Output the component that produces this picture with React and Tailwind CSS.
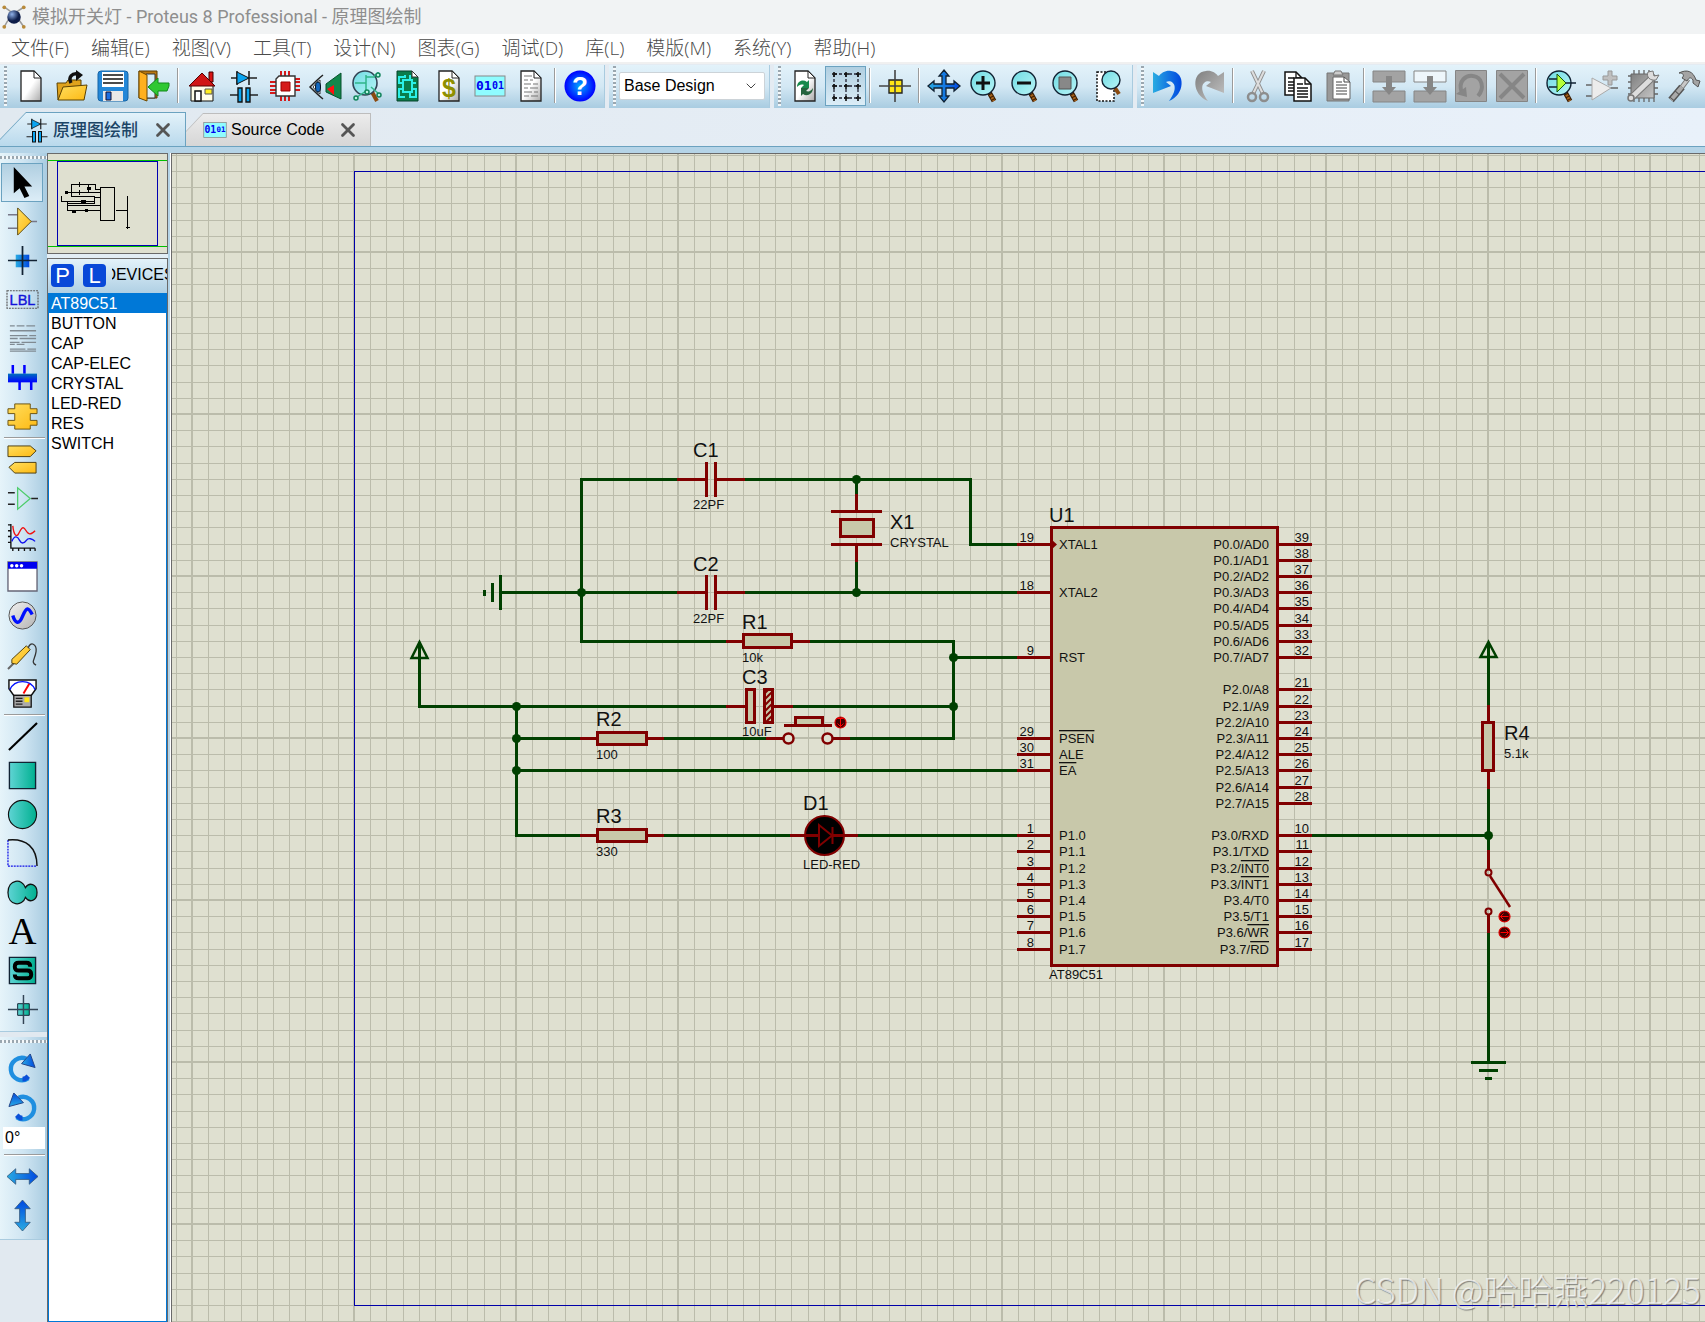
import { useState } from "react";
import { X, ChevronDown } from "lucide-react";

/* ---------- icons ---------- */

const Icon = ({ children, className = "h-8 w-8" }) => (
    <svg viewBox="0 0 32 32" className={`${className} flex-shrink-0 overflow-visible`} fill="none" aria-hidden="true">
        {children}
    </svg>
);

// Gradients shared by the icons
const Gradients = () => (
    <>
        <linearGradient id="page" x1="0" y1="0" x2="1" y2="1">
            <stop offset=".5" stopColor="#fff" />
            <stop offset="1" stopColor="#a8a8a8" />
        </linearGradient>
        <linearGradient id="gold" x1="0" y1="0" x2="1" y2="1">
            <stop offset="0" stopColor="#ffdf60" />
            <stop offset="1" stopColor="#fdb913" />
        </linearGradient>
        <linearGradient id="blue" x1="0" y1="0" x2="1" y2="0">
            <stop offset="0" stopColor="#29abe2" />
            <stop offset="1" stopColor="#0048e0" />
        </linearGradient>
        <linearGradient id="blueV" x1="0" y1="0" x2="0" y2="1">
            <stop offset="0" stopColor="#0048e0" />
            <stop offset="1" stopColor="#29abe2" />
        </linearGradient>
        <linearGradient id="bus" x1="0" y1="0" x2="0" y2="1">
            <stop offset="0" stopColor="#0071bc" />
            <stop offset="1" stopColor="#0000ff" />
        </linearGradient>
        <linearGradient id="teal" x1="0" y1="0" x2="1" y2="0">
            <stop offset="0" stopColor="#5fd4d4" />
            <stop offset="1" stopColor="#00b090" />
        </linearGradient>
        <linearGradient id="grey" x1="0" y1="0" x2="1" y2="1">
            <stop offset="0" stopColor="#f2f2f2" />
            <stop offset="1" stopColor="#b3b3b3" />
        </linearGradient>
        <linearGradient id="darkGrey" x1="0" y1="0" x2="1" y2="1">
            <stop offset="0" stopColor="#7f7f7f" />
            <stop offset="1" stopColor="#c4c4c4" />
        </linearGradient>
        <linearGradient id="lens" x1="0" y1="0" x2="1" y2="1">
            <stop offset="0" stopColor="#70dce4" />
            <stop offset="1" stopColor="#b8f4f6" />
        </linearGradient>
        <radialGradient id="help">
            <stop offset="0" stopColor="#00a8ff" />
            <stop offset="1" stopColor="#0000ff" />
        </radialGradient>
        <radialGradient id="ball" cx=".35" cy=".3">
            <stop offset="0" stopColor="#8fb0e8" />
            <stop offset="1" stopColor="#0d1c48" />
        </radialGradient>
    </>
);

const Sheet = () => (
    <>
        <path d="M6 1h13l7 7v23H6z" fill="url(#page)" stroke="#222" strokeWidth="1.3" />
        <path d="M19 1v7h7z" fill="#fff" stroke="#222" />
    </>
);

const Magnifier = ({ children }) => (
    <>
        <path d="m20 22 5 9" stroke="#3b1c00" strokeWidth="5" />
        <path d="m20 22 5 9" stroke="#a5611b" strokeWidth="3" strokeDasharray="2 1" />
        <circle cx="14" cy="13" r="12" fill="url(#lens)" stroke="#123" strokeWidth="1.4" />
        {children}
    </>
);

const BinaryBox = () => (
    <>
        <rect x="1" y="6" width="30" height="20" fill="#8ffcff" stroke="#888" />
        <text x="2" y="20" fontSize="13" fontWeight="700" fontFamily="DejaVu Sans Mono, monospace" fill="#0000f0">01</text>
        <text x="18" y="19" fontSize="10" fontWeight="700" fontFamily="DejaVu Sans Mono, monospace" fill="#0000f0">01</text>
    </>
);

const DiodeCap = () => (
    <>
        <path d="M3 8h26M9 1v14M21 1v14M2 25h9M21 25h9" stroke="#222" strokeWidth="1.6" />
        <path d="M9 2v12l12-6z" fill="#0aa4f0" stroke="#111" />
        <path d="M10 18h4v14h-4zM18 18h4v14h-4z" fill="#0aa4f0" stroke="#111" strokeWidth="1.4" />
    </>
);

const GlassHandle = <path d="m21 22 5 9" stroke="#8a4a10" strokeWidth="4" />;

const CopySheet = ({ x, y }) => (
    <g transform={`translate(${x} ${y})`}>
        <path d="M0 0h11l6 6v17H0z" fill="#fff" stroke="#111" strokeWidth="1.5" />
        <path d="M11 0v6h6M3 6h6M3 10h11M3 13h11M3 16h11M3 19h11" stroke="#111" strokeWidth="1.3" />
    </g>
);

const ICONS = {
    new: <Sheet />,
    open: (
        <>
            <path d="M2 30 1 13h9l2-3h13v6" fill="#e0a31c" stroke="#5d4200" />
            <path d="M2 30 7 17l24-2-3 15z" fill="url(#gold)" stroke="#5d4200" />
            <path d="M15 13c-3-6 1-10 7-9" stroke="#111" strokeWidth="3.5" />
            <path d="m20 0 7 5-7 6z" fill="#111" />
        </>
    ),
    save: (
        <>
            <rect x="1" y="1" width="30" height="30" rx="3" fill="#2387d8" stroke="#1764a5" />
            <path d="M5 2h22v15H5z" fill="#fff" />
            <path d="M6 5h20M6 9h20M6 13h20" stroke="#111" strokeWidth="1.5" />
            <path d="M6 21h20v10H6z" fill="#e8e8e8" />
            <path d="M9 22h5v8H9z" fill="#1d6fe0" stroke="#113" />
        </>
    ),
    exit: (
        <>
            <path d="M1 1h18v27H1z" fill="#b87711" stroke="#5d3b00" />
            <path d="M8 4h9v24H8z" fill="#d6ecf7" stroke="#333" />
            <path d="M1 1 9 5v26l-8-3z" fill="#ffb01f" stroke="#6b4700" />
            <path d="m10 17 10-9v5h11v3l-2 5h-9v5z" fill="#2fc832" stroke="#138a1b" />
        </>
    ),
    home: (
        <>
            <path d="M22 2h4v10h-4z" fill="#d81515" stroke="#400" />
            <path d="M4 15h22v16H4z" fill="#fffde8" stroke="#111" />
            <path d="M2 16 15 3l13 13z" fill="#d01616" stroke="#500" />
            <path d="M8 21h6v10H8z" fill="#fff" stroke="#111" strokeWidth="1.5" />
            <path d="M18 19h7v5h-7z" fill="#ffee20" stroke="#555" />
        </>
    ),
    schematic: <DiodeCap />,
    chip: (
        <>
            <path d="M1 12h30M1 16h30M1 20h30M12 1v30M16 1v30M20 1v30M1 23h6M25 9h6" stroke="#d51a1a" strokeWidth="2" />
            <path d="M10 6h16v20H7V9z" fill="#fff" stroke="#333" strokeWidth="1.4" />
            <path d="M12 12h9v9h-9z" fill="#d51a1a" stroke="#900" />
        </>
    ),
    view3d: (
        <>
            <path d="M31 3 16 14v8l15 7z" fill="#12884c" stroke="#07512c" />
            <path d="m24 15-7 4 7 6z" fill="#ff1010" />
            <path d="M13 5C8 9 4 13 0 17c4 4 8 8 13 12" stroke="#222" strokeWidth="1.5" />
            <path d="M3 17c3-4 5-6 7-7v14c-2-1-4-3-7-7z" fill="#fff" stroke="#333" />
            <ellipse cx="8" cy="17" rx="2.5" ry="5" fill="#1268c0" stroke="#012" />
        </>
    ),
    gerber: (
        <>
            {GlassHandle}
            <circle cx="14" cy="13" r="12" fill="url(#lens)" stroke="#345" strokeWidth="1.6" />
            <path d="M4 13h11V7h9M15 13v8l-9 6M15 5v8M23 5h4v-3M20 17l8 7" stroke="#31b58a" strokeWidth="1.5" />
            <g fill="#b8f4e0" stroke="#12845c" strokeWidth="1.5">
                <circle cx="27" cy="5" r="2" /><circle cx="5" cy="28" r="2" /><circle cx="28" cy="25" r="2" /><circle cx="16" cy="22" r="2" />
            </g>
        </>
    ),
    pcb: (
        <>
            <path d="M5 1h15l6 6v24H5z" fill="#0a7d4b" stroke="#07422a" />
            <path d="M20 1v6h6z" fill="#fff" stroke="#333" />
            <path d="M11 10h9v12h-9zM11 13H7v-6h6V5M20 13h4M11 19H7v8h6M20 19h4v8h-6v-5M18 10V5" stroke="#2bf0e8" strokeWidth="2" />
        </>
    ),
    bom: (
        <>
            <Sheet />
            <text x="9" y="27" fontSize="25" fontWeight="700" fontFamily="Liberation Sans, sans-serif" fill="#8f8f00">$</text>
        </>
    ),
    source: <BinaryBox />,
    notes: (
        <>
            <Sheet />
            <path d="M9 6h8M9 10h4m2 0h3M9 14h7m2 0h5M9 18h4m2 0h8M9 22h8m2 0h4M9 26h5m2 0h7" stroke="#777" strokeWidth="1.2" />
        </>
    ),
    help: (
        <>
            <circle cx="16" cy="16" r="15.5" fill="url(#help)" />
            <text x="16" y="25" textAnchor="middle" fontSize="26" fontWeight="700" fontFamily="Liberation Sans, sans-serif" fill="#fff">?</text>
        </>
    ),
    refresh: (
        <>
            <Sheet />
            <path d="M8 17c0-6 6-8 10-5l2-2v8h-8l3-3c-3-1-5 0-7 2z" fill="#178a4c" />
            <path d="M24 18c0 6-6 9-10 6l-2 2v-8h8l-3 3c3 1 5 0 7-3z" fill="#25643e" />
        </>
    ),
    grid: (
        <>
            <path d="M4 4h25M4 16h25M4 28h25M4 4v25M16 4v25M28 4v25" stroke="#223" strokeDasharray="3 2" strokeWidth="1.3" />
            <path d="M2 4h5M14 4h5M26 4h5M2 16h5M14 16h5M26 16h5M2 28h5M14 28h5M26 28h5M4 2v5M16 2v5M28 2v5M4 14v5M16 14v5M28 14v5M4 26v5M16 26v5M28 26v5" stroke="#111" strokeWidth="1.6" />
        </>
    ),
    origin: (
        <>
            <path d="M10 10h13v13H10z" fill="#ffe715" stroke="#222" strokeWidth="1.4" />
            <path d="M16 0v32M0 16h32" stroke="#444" strokeWidth="1.6" />
        </>
    ),
    pan: (
        <path d="m16 0 5 6h-3v8h8v-3l6 5-6 5v-3h-8v8h3l-5 6-5-6h3v-8H6v3l-6-5 6-5v3h8V6h-3z" fill="url(#blue)" stroke="#123" strokeWidth="1.3" />
    ),
    zoomIn: <Magnifier><path d="M7 13h14M14 6v14" stroke="#111" strokeWidth="3" /></Magnifier>,
    zoomOut: <Magnifier><path d="M7 13h14" stroke="#111" strokeWidth="3" /></Magnifier>,
    zoomAll: <Magnifier><path d="M8 7h12v12H8z" fill="#888" stroke="#555" /></Magnifier>,
    zoomArea: (
        <>
            <path d="M5 2h17v29H5z" fill="#fff" stroke="#111" strokeDasharray="2 1.5" strokeWidth="1.5" />
            <path d="m23 18 4 6" stroke="#8a4a10" strokeWidth="4" />
            <circle cx="19" cy="10" r="9" fill="url(#lens)" stroke="#123" strokeWidth="1.4" />
        </>
    ),
    undo: <path d="M1 2v21l18-7-5-4c7-3 14 5 3 19C33 25 34 2 19 1 14 0 9 3 7 6z" fill="url(#blue)" />,
    redo: <path d="M31 2v21l-18-7 5-4c-7-3-14 5-3 19C-1 25-2 2 13 1c5-1 10 2 12 5z" fill="url(#darkGrey)" />,
    cut: (
        <>
            <path d="m10 1 11 23M22 1 11 24" stroke="#8d8d8d" strokeWidth="4" />
            <path d="m10 1 11 23M22 1 11 24" stroke="#ddd" strokeWidth="2" />
            <circle cx="10" cy="27" r="4" stroke="#8d8d8d" strokeWidth="2.5" />
            <circle cx="22" cy="27" r="4" stroke="#8d8d8d" strokeWidth="2.5" />
        </>
    ),
    copy: <><CopySheet x={2} y={2} /><CopySheet x={11} y={8} /></>,
    paste: (
        <>
            <path d="M3 3h22v28H3z" fill="#999" stroke="#777" />
            <path d="M9 5h10l-2-4h-6z" fill="#ccc" stroke="#777" />
            <path d="M9 7h11l6 5v17H9z" fill="#fff" stroke="#666" />
            <path d="M20 7v5h6M12 12h6M12 15h11M12 18h11M12 21h11M12 24h11" stroke="#444" />
        </>
    ),
    blockCopy: (
        <>
            <path d="M0 1h32v11H0zM0 21h32v11H0z" fill="#a3a3a3" stroke="#858585" />
            <path d="M13 6h6v11h4l-7 8-7-8h4z" fill="#868686" />
        </>
    ),
    blockMove: (
        <>
            <path d="M0 1h32v11H0z" fill="#eef6fb" stroke="#858585" />
            <path d="M0 21h32v11H0z" fill="#a3a3a3" stroke="#858585" />
            <path d="M13 6h6v11h4l-7 8-7-8h4z" fill="#868686" />
        </>
    ),
    blockRotate: (
        <>
            <path d="M.5.5h31v31H.5z" fill="#a3a3a3" stroke="#858585" />
            <path d="M7 23C2 10 12 5 18 6c9 1 12 12 5 20" stroke="#868686" strokeWidth="4" />
            <path d="m1 24 10-7 1 10z" fill="#868686" />
        </>
    ),
    blockDelete: (
        <>
            <path d="M.5.5h31v31H.5z" fill="#a3a3a3" stroke="#858585" />
            <path d="m4 4 24 24M28 4 4 28" stroke="#868686" strokeWidth="4" />
        </>
    ),
    pick: (
        <Magnifier>
            <path d="M4 9h8M4 17h8M20 13h11" stroke="#123" strokeWidth="1.5" />
            <path d="M12 4v18l9-9z" fill="#b6ff3a" stroke="#151" />
        </Magnifier>
    ),
    makeDevice: (
        <>
            <path d="M0 15h6M0 26h6M24 18h8" stroke="#666" strokeWidth="1.6" />
            <path d="M6 8v22l19-12z" fill="#ececec" stroke="#aaa" />
            <path d="M22 1h4v5h5v4h-5v5h-4v-5h-5V6h5z" fill="#bfbfbf" stroke="#999" />
        </>
    ),
    packaging: (
        <>
            <path d="M7 0v32M12 0v32M17 0v32M22 0v32M27 5v27M1 6h30M1 12h30M1 18h30M1 24h30" stroke="#666" strokeWidth="1.3" />
            <path d="M4 4h23v24H4z" fill="url(#darkGrey)" stroke="#666" />
            <path d="M4 28 24 9" stroke="#777" strokeWidth="7" />
            <path d="M4 28 24 9" stroke="#ddd" strokeWidth="5" />
            <path d="M21 2c-2 5 2 9 8 8l3-5-5 1-1-5z" fill="#ddd" stroke="#777" />
            <circle cx="4" cy="28" r="3" fill="#ddd" stroke="#777" strokeWidth="1.5" />
        </>
    ),
    decompose: (
        <>
            <path d="m20 9-9 12" stroke="#777" strokeWidth="5" />
            <path d="m20 9-9 12" stroke="#c8c8c8" strokeWidth="3" />
            <path d="M14 17 3 30" stroke="#555" strokeWidth="7" />
            <path d="M14 17 3 30" stroke="#aaa" strokeWidth="4" strokeDasharray="7 1" />
            <path d="M11 3c8-4 14-2 17 7l4 1-2 6-5-4v-3c-2-3-4-3-6 1l-5-3c3-3 1-5-3-5z" fill="#a4a4a4" stroke="#555" />
        </>
    ),
    select: <path d="M7 0v27l6-5 5 10 5-2-5-10h8z" fill="#000" />,
    component: (
        <>
            <path d="M1 9h10M1 23h10M24 16h7" stroke="#778" strokeWidth="1.6" />
            <path d="M11 2v28l14-14z" fill="url(#gold)" stroke="#5d4a10" />
        </>
    ),
    junction: (
        <>
            <path d="M9 10h14v13H9z" fill="url(#blue)" />
            <path d="M16 1v30M1 16h30" stroke="#123" strokeWidth="1.8" />
        </>
    ),
    label: (
        <>
            <path d="M0 7h32v18H0z" stroke="#555" strokeDasharray="2 1" strokeWidth="1.2" />
            <text x="16" y="22" textAnchor="middle" fontSize="15" fontFamily="Liberation Sans, sans-serif" fill="#1414d8" stroke="#1414d8" strokeWidth=".4">LBL</text>
        </>
    ),
    script: (
        <path d="M3 3h5m2 0h8m2 0h9M3 8h27M3 13h18m2 0h7M3 16h8m2 0h17M3 20h10m2 0h15M3 22h5m2 0h8M3 27h16m2 0h9M3 29h27" stroke="#808a92" strokeWidth="1.4" />
    ),
    bus: (
        <>
            <path d="M6 3v9M18 3v9M13 20v9M25 20v9" stroke="#0000ff" strokeWidth="2.6" />
            <path d="M1 12h30v9H1z" fill="url(#bus)" />
        </>
    ),
    subcircuit: (
        <path d="M8 3h16v5h7v5h-7v7h7v5h-7v4H8v-4H1v-5h7v-7H1V8h7z" fill="url(#gold)" stroke="#6b5310" />
    ),
    terminal: (
        <>
            <path d="M1 2h23l6 5-6 6H1z" fill="url(#gold)" stroke="#4d3e10" />
            <path d="M30 19H8l-6 5 6 6h22z" fill="url(#gold)" stroke="#4d3e10" />
        </>
    ),
    pin: (
        <>
            <path d="M1 10h7M1 22h7M25 16h7" stroke="#222" strokeWidth="1.5" />
            <path d="M11 5v22l13-11z" stroke="#4dcc6a" strokeWidth="1.3" />
        </>
    ),
    graph: (
        <>
            <path d="M4 2v25h25M1 3h3M1 9h3M1 15h3M1 21h3M6 27v3M12 27v3M18 27v3M24 27v3M29 27v3" stroke="#111" strokeWidth="1.4" />
            <path d="M6 4c1 10 4 12 6 8s4-9 7-4 5 6 10 1" stroke="#f01010" strokeWidth="1.4" />
            <path d="M5 20c3-7 6-5 8-1s5 3 7 0 6-2 9 1" stroke="#1010f0" strokeWidth="1.4" />
        </>
    ),
    tape: (
        <>
            <path d="M1 1h30v30H1z" fill="#fff" stroke="#667" strokeWidth="1.4" />
            <path d="M1 1h30v7H1z" fill="#0000ee" />
            <circle cx="5" cy="5" r="1.8" fill="#fff" /><circle cx="10" cy="5" r="1.8" fill="#fff" /><circle cx="15" cy="5" r="1.8" fill="#fff" />
        </>
    ),
    generator: (
        <>
            <circle cx="16" cy="16" r="14" fill="url(#grey)" stroke="#555" />
            <path d="M6 16c2 7 6 11 10 1s6-10 10-2" stroke="#0010ff" strokeWidth="3.5" />
        </>
    ),
    probe: (
        <>
            <path d="m1 31 6-6" stroke="#666" strokeWidth="2" />
            <path d="M5 25v-4L20 7l4 4L10 26z" fill="url(#gold)" stroke="#4d3e10" />
            <path d="M22 9c2-7 9-4 8 4s-6 11 0 14" stroke="#333" strokeWidth="1.3" />
        </>
    ),
    meter: (
        <>
            <path d="M2 2h28v9l-5 7H7l-5-7z" fill="#fff" stroke="#111" strokeWidth="1.5" />
            <path d="M3 12C8 1 24 1 29 12" stroke="#0010ff" strokeWidth="1.5" />
            <path d="m17 16 6-10" stroke="#f00" strokeWidth="2" />
            <path d="M7 18h18v12H7z" fill="#aaa" stroke="#111" strokeWidth="1.3" />
            <path d="M9 21h7M9 24h7M9 27h7" stroke="#222" strokeWidth="1.3" />
            <path d="M18 20h5v5h-5z" fill="#ffe715" />
        </>
    ),
    line: <path d="M2 30 31 2" stroke="#000" strokeWidth="2.2" />,
    box: <path d="M2.500 2.500h27v27h-27z" fill="url(#teal)" stroke="#123" strokeWidth="1.4" />,
    circle: <circle cx="16" cy="16" r="14.500" fill="url(#teal)" stroke="#111" strokeWidth="1.2" />,
    arc: (
        <>
            <path d="M1 2v27h29" stroke="#1010e8" strokeWidth="1.3" strokeDasharray="2 1" />
            <path d="M1 2c19-2 30 8 30 27" stroke="#111" strokeWidth="1.5" />
        </>
    ),
    path2d: (
        <path d="M19 11C16 1 1 2 1 16s15 15 18 5c4 6 12 4 12-5s-8-11-12-5z" fill="url(#teal)" stroke="#111" strokeWidth="1.3" />
    ),
    text: (
        <text x="16" y="29" textAnchor="middle" fontSize="40" fontFamily="Liberation Serif, serif" fill="#000">A</text>
    ),
    symbol: (
        <>
            <path d="M2.500 2.500h27v27h-27z" fill="url(#teal)" stroke="#123" strokeWidth="1.4" />
            <path d="M24 12q0-4-4-4h-8q-4 0-4 4t4 4h9q4 0 4 4t-4 4h-9q-4 0-4-4" stroke="#000" strokeWidth="4" />
        </>
    ),
    marker: (
        <>
            <path d="M11 10h12v12H11z" fill="url(#teal)" stroke="#123" />
            <path d="M17 1v30M1 16h31" stroke="#345" strokeWidth="1.5" />
        </>
    ),
    rotateCw: (
        <>
            <path d="M22 26A11.500 11.500 0 1 1 20 6" stroke="#1f8fe0" strokeWidth="4.5" />
            <path d="M16 27q3 0 6-3" stroke="#0a50d8" strokeWidth="5" />
            <path d="m24 1 5 14-14-4z" fill="url(#blue)" stroke="#248" />
        </>
    ),
    rotateCcw: (
        <>
            <path d="M10 26A11.500 11.500 0 1 0 12 6" stroke="#1f8fe0" strokeWidth="4.5" />
            <path d="M16 27q-3 0-6-3" stroke="#0a50d8" strokeWidth="5" />
            <path d="M7 1 2 15l15-4z" fill="url(#blueV)" stroke="#248" />
        </>
    ),
    flipX: <path d="m0 16 9-8v5h14V8l9 8-9 8v-5H9v5z" fill="url(#blue)" stroke="#357" strokeWidth=".8" />,
    flipY: <path d="m16 0 8 9h-5v14h5l-8 9-8-9h5V9H8z" fill="url(#blueV)" stroke="#357" strokeWidth=".8" />,
};

/* ---------- data ---------- */

const MENUS = ["文件(F)", "编辑(E)", "视图(V)", "工具(T)", "设计(N)", "图表(G)", "调试(D)", "库(L)", "模版(M)", "系统(Y)", "帮助(H)"];

const FILE_TOOLS = ["new", "open", "save", "exit", "|", "home", "schematic", "chip", "view3d", "gerber", "pcb", "bom", "source", "notes", "|", "help"];
const VIEW_TOOLS = ["refresh", "grid", "|", "origin", "|", "pan", "zoomIn", "zoomOut", "zoomAll", "zoomArea"];
const EDIT_TOOLS = ["undo", "redo", "|", "cut", "copy", "paste", "|", "blockCopy", "blockMove", "blockRotate", "blockDelete", "|", "pick", "makeDevice", "packaging", "decompose"];

const MODES = [
    "select", "component", "junction", "label", "script", "bus", "subcircuit", "|",
    "terminal", "pin", "graph", "tape", "generator", "probe", "meter", "|",
    "line", "box", "circle", "arc", "path2d", "text", "symbol", "marker",
];

const DEVICES = ["AT89C51", "BUTTON", "CAP", "CAP-ELEC", "CRYSTAL", "LED-RED", "RES", "SWITCH"];

// [y, number, name, overlined part]
const LEFT_PINS = [
    [544, "19", "XTAL1"], [592, "18", "XTAL2"], [657, "9", "RST"],
    [738, "29", "", "PSEN"], [754, "30", "ALE"], [770, "31", "", "EA"],
    [835, "1", "P1.0"], [851, "2", "P1.1"], [868, "3", "P1.2"], [884, "4", "P1.3"],
    [900, "5", "P1.4"], [916, "6", "P1.5"], [932, "7", "P1.6"], [949, "8", "P1.7"],
];

const RIGHT_PINS = [
    [544, "39", "P0.0/AD0"], [560, "38", "P0.1/AD1"], [576, "37", "P0.2/AD2"], [592, "36", "P0.3/AD3"],
    [608, "35", "P0.4/AD4"], [625, "34", "P0.5/AD5"], [641, "33", "P0.6/AD6"], [657, "32", "P0.7/AD7"],
    [689, "21", "P2.0/A8"], [706, "22", "P2.1/A9"], [722, "23", "P2.2/A10"], [738, "24", "P2.3/A11"],
    [754, "25", "P2.4/A12"], [770, "26", "P2.5/A13"], [787, "27", "P2.6/A14"], [803, "28", "P2.7/A15"],
    [835, "10", "P3.0/RXD"], [851, "11", "P3.1/TXD"], [868, "12", "P3.2/", "INT0"], [884, "13", "P3.3/", "INT1"],
    [900, "14", "P3.4/T0"], [916, "15", "P3.5/T1"], [932, "16", "P3.6/", "WR"], [949, "17", "P3.7/", "RD"],
];

// reference and value of each part
const LABELS = [
    ["C1", 693, 457, "22PF", 509], ["C2", 693, 571, "22PF", 623], ["X1", 890, 529, "CRYSTAL", 547],
    ["R1", 742, 629, "10k", 662], ["C3", 742, 684, "10uF", 736], ["R2", 596, 726, "100", 759],
    ["R3", 596, 823, "330", 856], ["D1", 803, 810, "LED-RED", 869], ["U1", 1049, 522, "AT89C51", 979],
    ["R4", 1504, 740, "5.1k", 758],
];

const JUNCTIONS = [[856, 479], [856, 592], [581, 592], [953, 657], [953, 706], [516, 706], [516, 738], [516, 770], [1488, 835]];
const GRID_STEPS = [17, 33, 50, 66, 82, 98, 114, 131, 147];

/* ---------- tool bars ---------- */

const ToolGroup = ({ children, className = "" }) => (
    <div className={`flex h-[43px] items-center border-r border-[#a9cbdf] bg-linear-to-b from-[#e3f2fa] via-[#d3e8f4] to-[#a9cce1] pr-1 pb-[2px] ${className}`}>
        <span className="mr-[3px] ml-1 h-10 w-[3px] flex-shrink-0 bg-[repeating-linear-gradient(to_bottom,#9aa7b0_0_2px,#f4f8fa_2px_4px)]" />
        {children}
    </div>
);

const Tools = ({ items, active }) =>
    items.map((name, i) =>
        name === "|" ? (
            <span key={i} className="mx-[3px] h-[35px] w-[2px] flex-shrink-0 border-r border-white bg-[#9b9b9b]" />
        ) : (
            <button
                key={i}
                type="button"
                aria-label={name}
                className={`flex h-10 w-[41px] flex-shrink-0 items-center justify-center ${
                    name === active ? "border border-[#6ba2c0] bg-linear-to-b from-[#b0cfe1] to-[#dcedf7]" : ""
                }`}
            >
                <Icon>{ICONS[name]}</Icon>
            </button>
        )
    );

const ModeButton = ({ name, active }) => (
    <button
        type="button"
        aria-label={name}
        className={`ml-px flex h-[39px] w-[42px] flex-shrink-0 items-center justify-center ${
            active ? "border border-[#6ba2c0] bg-linear-to-b from-[#b0cfe1] to-[#dcedf7]" : ""
        }`}
    >
        <Icon className="h-[31px] w-[31px]">{ICONS[name]}</Icon>
    </button>
);

const ModeGrip = () => (
    <span className="mt-[3px] mb-1 h-[3px] w-full flex-shrink-0 bg-[repeating-linear-gradient(to_right,#9aa7b0_0_2px,#f4f8fa_2px_4px)]" />
);

const ModeRule = () => <span className="mr-[2px] ml-1 my-px h-[2px] flex-shrink-0 border-b border-white bg-[#9b9b9b]" />;

const ModeBar = () => (
    <aside className="flex w-[47px] flex-shrink-0 flex-col bg-[#e1e9f0] font-['Liberation_Sans',sans-serif]">
        <div className="flex flex-col border-b border-[#a9cbdf] bg-linear-to-r from-[#e6f4fa] via-[#cfe5f2] to-[#a9cce1] pb-[2px]">
            <ModeGrip />
            {MODES.map((name, i) => (name === "|" ? <ModeRule key={i} /> : <ModeButton key={i} name={name} active={name === "select"} />))}
        </div>
        <div className="mt-[5px] flex flex-col border-b border-[#a9cbdf] bg-linear-to-r from-[#e6f4fa] via-[#cfe5f2] to-[#a9cce1] pb-1">
            <ModeGrip />
            <span className="h-[2px]" />
            <ModeButton name="rotateCw" />
            <ModeButton name="rotateCcw" />
            <input aria-label="Rotation" defaultValue="0°" className="mr-[2px] ml-[3px] h-[22px] w-[42px] bg-white px-[2px] text-base" />
            <span className="h-1" />
            <ModeRule />
            <ModeButton name="flipX" />
            <ModeButton name="flipY" />
        </div>
    </aside>
);

/* ---------- tabs ---------- */

const TabStrip = () => (
    <div className="flex h-[39px] items-end border-b border-[#6ba2c0] bg-linear-to-r from-[#e1e9f0] to-[#e9f1fa]">
        <div className="h-[34px] w-[186px] bg-[#6ba2c0] pt-px pr-px [clip-path:polygon(0_27px,26px_0,100%_0,100%_100%,0_100%)]">
            <div className="flex h-full items-center bg-linear-to-b from-[#e3f2fa] to-[#b9d9ec] pr-[11px] pl-[25px] [clip-path:polygon(0_27px,26px_0,100%_0,100%_100%,0_100%)]">
                <Icon className="h-6 w-6">{ICONS.schematic}</Icon>
                <button type="button" className="ml-1 text-[17px] leading-6 font-medium text-[#1c4566]">原理图绘制</button>
                <button type="button" aria-label="Close" className="ml-auto text-[#555]"><X size={22} strokeWidth={3} /></button>
            </div>
        </div>
        <div className="h-[33px] w-[185px] bg-[#bdbdbd] pt-px pr-px [clip-path:polygon(0_18px,17px_0,100%_0,100%_100%,0_100%)]">
            <div className="flex h-full items-center bg-linear-to-b from-[#ececec] to-[#d6d6d6] pr-[11px] pl-[17px] [clip-path:polygon(0_18px,17px_0,100%_0,100%_100%,0_100%)]">
                <Icon className="h-6 w-6">{ICONS.source}</Icon>
                <button type="button" className="ml-1 font-['Liberation_Sans',sans-serif] text-base text-black">Source Code</button>
                <button type="button" aria-label="Close" className="ml-auto text-[#555]"><X size={22} strokeWidth={3} /></button>
            </div>
        </div>
    </div>
);

/* ---------- device panel ---------- */

const DevicePanel = () => {
    const [selected, setSelected] = useState("AT89C51");

    return (
        <section className="flex w-[121px] flex-shrink-0 flex-col bg-[#e3eef5] font-['Liberation_Sans',sans-serif]">
            <div className="h-[101px] border border-[#6a6a6a] bg-[#dfe0d0]">
                <svg className="h-full w-full" fill="none" shapeRendering="crispEdges" aria-label="Overview">
                    <path d="M0 6.500h119M0 92.500h119" stroke="#00c000" />
                    <path d="M9.500 7.500h100v84h-100z" stroke="#0000b0" />
                    <g stroke="#000">
                        <path d="M52.500 33.500h14v33h-14z" />
                        <path d="M23.500 42.500V30.500h24v5h4M18 38.500h34M23.500 38v4.500h23v7M46 43.500h6M13.500 42v5.500h33M19.500 47v9.500h32M19 49.500h28M19 51.500h33M68 56.500h11M79.500 42v33M31.500 28v5M31.500 36v5M40.500 30v9M78 73.500h4" />
                        <path d="M39 34h4M33 47h5M24 57h4M37 56h3M17 38h3" strokeWidth="3" />
                    </g>
                </svg>
            </div>
            <div className="mt-1 flex flex-1 flex-col border border-b-0 border-[#6a6a6a]">
                <div className="flex h-[34px] items-center bg-linear-to-b from-[#e3f2fa] to-[#b0d0e4] pb-[2px]">
                    <button type="button" className="ml-[3px] h-[23px] w-[23px] flex-shrink-0 rounded-[4px] bg-[#0848d8] text-[22px] leading-[23px] text-white">P</button>
                    <button type="button" className="ml-[9px] h-[23px] w-[23px] flex-shrink-0 rounded-[4px] bg-[#0848d8] text-[22px] leading-[23px] text-white">L</button>
                    <span className="ml-[6px] flex flex-1 justify-center overflow-hidden text-base">
                        <span>DEVICES</span>
                    </span>
                </div>
                <ul className="flex-1 border border-t-0 border-[#0078d7] bg-white">
                    {DEVICES.map((name) => (
                        <li key={name}>
                            <button
                                type="button"
                                onClick={() => setSelected(name)}
                                className={`block h-5 w-full pl-[2px] text-left text-base leading-[22px] ${
                                    name === selected ? "bg-[#0078d7] text-white" : "text-black"
                                }`}
                            >
                                {name}
                            </button>
                        </li>
                    ))}
                </ul>
            </div>
        </section>
    );
};

/* ---------- schematic ---------- */

const Pin = ({ side, y, number, name, over }) => {
    const left = side === "left";
    return (
        <g>
            <path d={left ? `M1017 ${y + 0.5}H1051` : `M1279 ${y + 0.5}H1312`} stroke="#800000" strokeWidth="3" shapeRendering="crispEdges" />
            <text x={left ? 1034 : 1309} y={y - 2} textAnchor="end">{number}</text>
            <text x={left ? 1059 : 1269} y={y + 5} textAnchor={left ? "start" : "end"}>
                {name}
                {over && <tspan className="overline">{over}</tspan>}
            </text>
        </g>
    );
};

const Actuator = ({ x, y, d }) => (
    <g transform={`translate(${x} ${y})`}>
        <circle r="5.500" fill="#400000" stroke="#e00000" strokeWidth="1.200" />
        <path d={d} stroke="#ff0000" />
    </g>
);

const Schematic = () => (
    <svg className="min-w-0 flex-1" fill="none" aria-label="Schematic">
        <defs>
            <Gradients />
            <pattern id="grid" x="191" y="89" width="162" height="162" patternUnits="userSpaceOnUse">
                <path d="M0 0h162v162H0z" fill="#dfe0d0" />
                <g fill="#bbbcab">
                    <path d="M0 0h2v162H0zM0 0h162v2H0z" />
                    {GRID_STEPS.map((n) => (
                        <path key={n} d={`M${n} 0h1v162h-1zM0 ${n}h162v1H0z`} />
                    ))}
                </g>
            </pattern>
            <pattern id="hatch" width="6" height="6" patternUnits="userSpaceOnUse">
                <path d="M0 0h6v6H0z" fill="#c8c8aa" />
                <path d="m-1 7 8-8M-3 3l6-6M3 9l6-6" stroke="#800000" strokeWidth="2" />
            </pattern>
        </defs>

        <g transform="translate(-172 -154)">
            <path d="M172 154h4000v3000H172z" fill="url(#grid)" shapeRendering="crispEdges" />
            <path d="M4200 171.500H354.500V1305.500H4200" stroke="#0000a8" shapeRendering="crispEdges" />

            {/* wires */}
            <g stroke="#004000" strokeWidth="3" shapeRendering="crispEdges">
                <path d="M677 479.500H581.500V641.500H726M745 479.500H970.500V544.500H1017M501 592.500H677M745 592.500H1017" />
                <path d="M500.500 575V610M492.500 583V602M484.500 590V596M856.500 479V494M856.500 562V592" />
                <path d="M810 641.500H953.500V738.500H850M953 657.500H1017M793 706.500H953" />
                <path d="M419.500 642V706.500H726M516.500 706V835.500H580M516 738.500H580M664 738.500H766M516 770.500H1017" />
                <path d="M664 835.500H790M858 835.500H1017M1312 835.500H1488" />
                <path d="M1488.500 642V705M1488.500 789V850M1488.500 933V1062M1471 1062.500H1506M1479 1070.500H1498M1485 1078.500H1492" />
            </g>
            <path d="m419.500 642 8 16h-16zM1488.500 642l8 15h-16z" stroke="#004000" strokeWidth="2.500" />
            <g fill="#004000">
                {JUNCTIONS.map(([x, y]) => (
                    <circle key={`${x}-${y}`} cx={x + 0.5} cy={y + 0.5} r="4.500" />
                ))}
            </g>

            {/* parts */}
            <g stroke="#800000" strokeWidth="3" fill="#c8c8aa" shapeRendering="crispEdges">
                <path d="M677 479.500H706M715 479.500H745M706.500 462V497M715.500 462V497" />
                <path d="M677 592.500H706M715 592.500H745M706.500 575V610M715.500 575V610" />
                <path d="M856.500 494V511M856.500 545V562M831 511.500H882M831 544.500H882M840.500 519.500h33v17h-33z" />
                <path d="M726 641.500H743M793 641.500H810M743.500 634.500h48v13h-48z" />
                <path d="M726 706.500H745M774 706.500H793M746.500 689.500h8v33h-8z" />
                <path d="M764.500 689.500h8v33h-8z" fill="url(#hatch)" />
                <path d="M580 738.500H597M648 738.500H664M597.500 732.500h49v12h-49z" />
                <path d="M580 835.500H597M648 835.500H664M597.500 829.500h49v12h-49z" />
                <path d="M766 738.500H783M833 738.500H850M784 725.500H832M795.500 717.500h27v8h-27z" />
                <path d="M1488.500 705V722M1488.500 772V789M1482.500 722.500h11v48h-11z" />
                <path d="M1488.500 850V869M1488.500 915V933" />
                <path d="M1051.500 527.500h226v438h-226z" />
            </g>
            <g stroke="#800000" strokeWidth="2.500">
                <circle cx="788.500" cy="738.500" r="5" fill="#dfe0d0" />
                <circle cx="827.500" cy="738.500" r="5" fill="#dfe0d0" />
                <circle cx="1488.500" cy="872.500" r="3" strokeWidth="2" />
                <circle cx="1488.500" cy="911.500" r="3" strokeWidth="2" />
                <path d="m1490 876 20 31" />
                <circle cx="824.500" cy="835.500" r="19.500" fill="#000" strokeWidth="2" />
                <path d="M790 835.500H818M832 835.500H858" strokeWidth="3" />
                <path d="M819 825v21l13-10.500zM832.500 827v17" strokeWidth="2" />
            </g>
            <path d="m1051 539 6 5.500-6 5.500z" fill="#800000" />
            <Actuator x={840.5} y={722.5} d="M0-4V4M-3-4H3M-3 1 0 4 3 1" />
            <Actuator x={1504.5} y={916.5} d="M-4 0H4M-1-3-4 0-1 3" />
            <Actuator x={1504.5} y={932.5} d="M-4 0H4M1-3 4 0 1 3" />

            {/* names and values */}
            <g fill="#111" className="font-['Liberation_Sans',sans-serif] text-[13px]">
                {LABELS.map(([ref, x, y, value, valueY]) => (
                    <g key={ref}>
                        <text x={x} y={y} className="text-xl">{ref}</text>
                        <text x={x} y={valueY}>{value}</text>
                    </g>
                ))}
                {LEFT_PINS.map(([y, number, name, over]) => (
                    <Pin key={number} side="left" y={y} number={number} name={name} over={over} />
                ))}
                {RIGHT_PINS.map(([y, number, name, over]) => (
                    <Pin key={number} side="right" y={y} number={number} name={name} over={over} />
                ))}
            </g>
        </g>
    </svg>
);

/* ---------- window ---------- */

const App = () => (
    <div className="flex min-h-screen flex-col overflow-hidden bg-[#e1e9f0] font-['Open_Sans','Noto_Sans_CJK_SC',sans-serif]">
        <header className="flex h-[34px] items-center bg-[#f1f3f4] pl-[2px]">
            <Icon className="h-6 w-6">
                <path d="M3 3c8 4 20 16 26 26M29 3C20 8 8 18 3 29" stroke="#9a9a9a" strokeWidth="2" />
                <circle cx="16" cy="16" r="9" fill="url(#ball)" />
                <g fill="#b88a3a">
                    <circle cx="3" cy="3" r="2.500" /><circle cx="29" cy="3" r="2.500" /><circle cx="3" cy="29" r="2.500" /><circle cx="29" cy="29" r="2.500" />
                </g>
            </Icon>
            <h1 className="ml-[6px] font-['Roboto','Noto_Sans_CJK_SC',sans-serif] text-[18px] leading-6 whitespace-nowrap text-[#8e8e8e]">
                模拟开关灯 - Proteus 8 Professional - 原理图绘制
            </h1>
        </header>

        <nav className="flex h-7 items-center bg-white">
            {MENUS.map((menu) => (
                <button key={menu} type="button" className="px-[11px] text-[19px] leading-7 font-light whitespace-nowrap text-[#4a4a4a]">
                    {menu}
                </button>
            ))}
        </nav>

        <div className="flex h-[46px] items-end gap-1 overflow-hidden border-t-2 border-[#f0f0f0] bg-[#e4ebf2]">
            <ToolGroup><Tools items={FILE_TOOLS} /></ToolGroup>
            <ToolGroup>
                <label className="relative flex items-center">
                    <select aria-label="Design variant" className="h-7 w-[146px] appearance-none rounded-[2px] border border-[#ccd3d8] bg-white pl-1 font-['Liberation_Sans',sans-serif] text-base leading-5 text-black">
                        <option>Base Design</option>
                    </select>
                    <ChevronDown size={16} strokeWidth={1.5} className="pointer-events-none absolute right-[6px] text-[#444]" />
                </label>
            </ToolGroup>
            <ToolGroup><Tools items={VIEW_TOOLS} active="grid" /></ToolGroup>
            <ToolGroup className="flex-1"><Tools items={EDIT_TOOLS} /></ToolGroup>
        </div>

        <TabStrip />

        <main className="flex flex-1 bg-[#b5d4e7] pt-[6px]">
            <ModeBar />
            <DevicePanel />
            <div className="relative ml-[3px] flex min-w-0 flex-1 overflow-hidden border-t border-l border-[#6a6a6a] shadow-[-1px_0_0_#fff]">
                <Schematic />
                <p className="absolute right-1 bottom-[11px] font-['Noto_Sans_CJK_SC',sans-serif] text-[35px] leading-[44px] font-light whitespace-nowrap text-white/70 [text-shadow:1px_1px_1px_rgba(90,90,90,0.7)]">
                    CSDN @哈哈燕220125
                </p>
            </div>
        </main>
    </div>
);

export default App;
